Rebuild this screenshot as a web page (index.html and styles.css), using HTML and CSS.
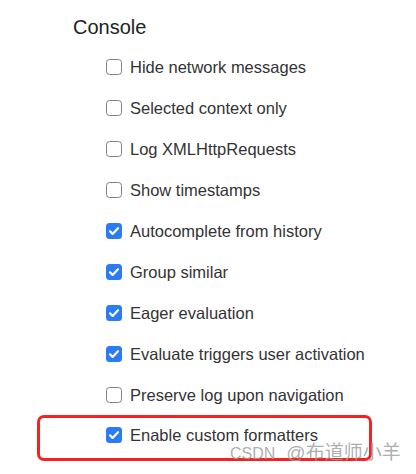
FILE: index.html
```html
<!DOCTYPE html>
<html>
<head>
<meta charset="utf-8">
<link rel="stylesheet" href="styles.css">
</head>
<body>
<div class="panel">
  <div class="title">Console</div>
  <ul class="list">
    <li class="row"><span class="cb"></span><span class="label">Hide network messages</span></li>
    <li class="row"><span class="cb"></span><span class="label">Selected context only</span></li>
    <li class="row"><span class="cb"></span><span class="label">Log XMLHttpRequests</span></li>
    <li class="row"><span class="cb"></span><span class="label">Show timestamps</span></li>
    <li class="row"><span class="cb on"><svg viewBox="0 0 16 16"><path d="M4 8.3l2.6 2.6L12 5.2" fill="none" stroke="#fff" stroke-width="2.2" stroke-linecap="round" stroke-linejoin="round"/></svg></span><span class="label">Autocomplete from history</span></li>
    <li class="row"><span class="cb on"><svg viewBox="0 0 16 16"><path d="M4 8.3l2.6 2.6L12 5.2" fill="none" stroke="#fff" stroke-width="2.2" stroke-linecap="round" stroke-linejoin="round"/></svg></span><span class="label">Group similar</span></li>
    <li class="row"><span class="cb on"><svg viewBox="0 0 16 16"><path d="M4 8.3l2.6 2.6L12 5.2" fill="none" stroke="#fff" stroke-width="2.2" stroke-linecap="round" stroke-linejoin="round"/></svg></span><span class="label">Eager evaluation</span></li>
    <li class="row"><span class="cb on"><svg viewBox="0 0 16 16"><path d="M4 8.3l2.6 2.6L12 5.2" fill="none" stroke="#fff" stroke-width="2.2" stroke-linecap="round" stroke-linejoin="round"/></svg></span><span class="label">Evaluate triggers user activation</span></li>
    <li class="row"><span class="cb"></span><span class="label">Preserve log upon navigation</span></li>
    <li class="row highlight"><span class="cb on"><svg viewBox="0 0 16 16"><path d="M4 8.3l2.6 2.6L12 5.2" fill="none" stroke="#fff" stroke-width="2.2" stroke-linecap="round" stroke-linejoin="round"/></svg></span><span class="label">Enable custom formatters</span></li>
  </ul>
</div>
<div class="watermark"><span class="wm-latin">CSDN</span><span class="wm-cjk">@布道师小羊</span></div>
</body>
</html>
```
FILE: styles.css
```css
html, body {
  margin: 0;
  padding: 0;
  background: #fff;
}
body {
  width: 416px;
  height: 474px;
  position: relative;
  overflow: hidden;
  font-family: "Liberation Sans", Arial, sans-serif;
  color: #333;
}
.panel {
  padding: 15px 0 0 73px;
}
.title {
  font-size: 20px;
  line-height: 24px;
  color: #222;
}
.list {
  list-style: none;
  margin: 7px 0 0 0;
  padding: 0 0 0 33px;
}
.row {
  height: 41px;
  display: flex;
  align-items: center;
  gap: 8px;
}
.cb {
  box-sizing: border-box;
  width: 16px;
  height: 16px;
  border: 1.5px solid #808080;
  border-radius: 3.5px;
  flex: none;
  display: flex;
  align-items: center;
  justify-content: center;
}
.cb.on {
  border: none;
  background: #2b7bf3;
}
.cb svg {
  width: 16px;
  height: 16px;
  display: block;
}
.label {
  font-size: 16.5px;
  line-height: 20px;
  color: #333;
}
.highlight {
  box-sizing: border-box;
  height: 46px;
  width: 335px;
  margin-left: -69px;
  padding: 0 0 6px 66px;
  border: 3px solid #f4231f;
  border-radius: 7px;
}
.watermark {
  position: absolute;
  left: 230px;
  top: 437px;
  color: rgba(160, 160, 160, 0.85);
  white-space: nowrap;
  display: flex;
  align-items: baseline;
  gap: 11px;
}
.wm-latin {
  font-family: "Liberation Sans", Arial, sans-serif;
  font-size: 16px;
}
.wm-cjk {
  font-family: "Liberation Sans", "Noto Sans CJK SC", sans-serif;
  font-size: 19px;
}
```
